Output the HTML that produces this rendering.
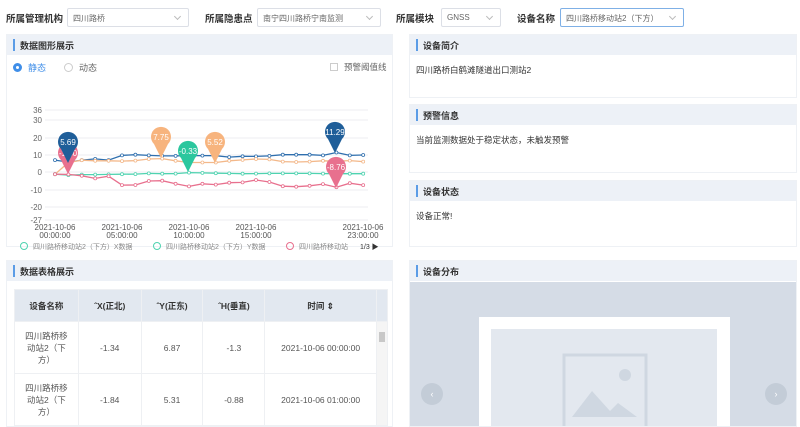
<!DOCTYPE html>
<html><head><meta charset="utf-8"><style>
*{box-sizing:border-box;margin:0;padding:0}
body{width:800px;height:427px;overflow:hidden;background:#fff;font-family:"Liberation Sans","Noto Sans CJK SC",sans-serif;font-size:9px;color:#333;position:relative}
.a{position:absolute}
.lbl{font-weight:bold;font-size:9.5px;color:#333}
.sel{border:1px solid #dcdfe6;border-radius:2px;height:19px;font-size:8px;color:#666;padding:4px 5px;background:#fff}
.sel:after{content:"";position:absolute;right:8px;top:5px;width:4px;height:4px;border-right:1px solid #bbb;border-bottom:1px solid #bbb;transform:rotate(45deg)}
.panel{background:#fff;border:1px solid #eef1f5}
.hd{height:20px;background:#edf1f7;font-weight:bold;font-size:9px;padding:4px 0 0 13px;position:relative}
.hd:before{content:"";position:absolute;left:6px;top:4px;width:2px;height:12px;background:#5b9ce6}
.body{font-size:8.5px;padding:9px 6px;color:#333}
table{border-collapse:collapse;font-size:8.5px}
td,th{text-align:center;border:1px solid #eef0f3}
th{background:#e2e8f0;font-weight:bold;height:32px}
td{height:52px;color:#555}
</style></head><body>
<div class="a lbl" style="left:6px;top:11px">所属管理机构</div>
<div class="a sel" style="left:67px;top:8px;width:122px">四川路桥</div>
<div class="a lbl" style="left:205px;top:11px">所属隐患点</div>
<div class="a sel" style="left:257px;top:8px;width:124px">南宁四川路桥宁南监测</div>
<div class="a lbl" style="left:396px;top:11px">所属模块</div>
<div class="a sel" style="left:441px;top:8px;width:60px">GNSS</div>
<div class="a lbl" style="left:517px;top:11px">设备名称</div>
<div class="a sel" style="left:560px;top:8px;width:124px;border-color:#7fb0e6">四川路桥移动站2（下方）</div>

<div class="a panel" style="left:6px;top:34px;width:387px;height:213px">
<div class="hd">数据图形展示</div>
<div class="a" style="left:6px;top:28px;width:9px;height:9px;border-radius:50%;border:3px solid #3f8ee8"></div>
<div class="a" style="left:21px;top:26px;color:#3f8ee8;font-size:9px">静态</div>
<div class="a" style="left:57px;top:28px;width:9px;height:9px;border-radius:50%;border:1px solid #ccc"></div>
<div class="a" style="left:72px;top:26px;color:#666;font-size:9px">动态</div>
<div class="a" style="left:323px;top:28px;width:8px;height:8px;border:1px solid #ccc"></div>
<div class="a" style="left:337px;top:26px;color:#666;font-size:8.5px">预警阈值线</div>
</div>
<svg class="a" style="left:0;top:0" width="400" height="250" id="ch"></svg>

<div class="a panel" style="left:409px;top:34px;width:388px;height:64px"><div class="hd">设备简介</div><div class="body">四川路桥白鹤滩隧道出口测站2</div></div>
<div class="a panel" style="left:409px;top:104px;width:388px;height:69px"><div class="hd">预警信息</div><div class="body">当前监测数据处于稳定状态，未触发预警</div></div>
<div class="a panel" style="left:409px;top:180px;width:388px;height:67px"><div class="hd">设备状态</div><div class="body">设备正常!</div></div>

<div class="a panel" style="left:6px;top:260px;width:387px;height:167px;overflow:hidden"><div class="hd">数据表格展示</div>
<table class="a" style="left:7px;top:28px;width:374px">
<tr><th style="width:64px">设备名称</th><th style="width:63px">ˆX(正北)</th><th style="width:62px">ˆY(正东)</th><th style="width:62px">ˆH(垂直)</th><th style="width:112px">时间 ⇕</th><th style="width:11px"></th></tr>
<tr><td>四川路桥移<br>动站2（下<br>方）</td><td>-1.34</td><td>6.87</td><td>-1.3</td><td>2021-10-06 00:00:00</td><td rowspan="2" style="background:#f5f5f5;vertical-align:top;padding-top:10px"><div style="width:6px;height:10px;background:#c8c8c8;margin:auto"></div></td></tr>
<tr><td>四川路桥移<br>动站2（下<br>方）</td><td>-1.84</td><td>5.31</td><td>-0.88</td><td>2021-10-06 01:00:00</td></tr>
</table></div>

<div class="a panel" style="left:409px;top:260px;width:388px;height:167px;overflow:hidden"><div class="hd">设备分布</div>
<div class="a" style="left:0;top:21px;width:388px;height:146px;background:#d5dce6"></div>
<div class="a" style="left:69px;top:56px;width:251px;height:120px;background:#fff"></div>
<div class="a" style="left:81px;top:68px;width:226px;height:110px;background:#e3e8ef"></div>
<svg class="a" style="left:152px;top:92px" width="86" height="80"><rect x="2" y="2" width="82" height="76" fill="none" stroke="#cfd7e1" stroke-width="3"/><circle cx="63" cy="22" r="6" fill="#cfd7e1"/><path d="M10 64 L30 38 L48 58 L56 50 L75 64Z" fill="#cfd7e1"/></svg>
<div class="a" style="left:11px;top:122px;width:22px;height:22px;border-radius:50%;background:#c3ccd7;color:#fff;text-align:center;line-height:22px">‹</div>
<div class="a" style="left:355px;top:122px;width:22px;height:22px;border-radius:50%;background:#c3ccd7;color:#fff;text-align:center;line-height:22px">›</div>
</div>
<script>
var s=document.getElementById('ch'),h='';
function Y(v){return 172-v*1.73}
[[36,110],[30,120],[20,138],[10,155],[0,172],[-10,190],[-20,207],[-27,220]].forEach(function(t){h+='<line x1="45" x2="368" y1="'+t[1]+'" y2="'+t[1]+'" stroke="#e6e9ee" stroke-width="0.8"/><text x="42" y="'+(t[1]+3)+'" font-size="8" fill="#666" text-anchor="end">'+t[0]+'</text>';});
var S=[["#2f6fae",[6.9,5.7,6.9,7.6,6.9,9.6,10,9.6,9.3,9.3,9.4,9.5,9.4,8.6,9.1,9,9.3,10,10,10,9.6,11.3,9.6,9.8]],
["#f3b88a",[-1.3,5.5,6.8,6.5,6.5,6.3,6.6,7.5,7.75,6.5,5.5,5.5,5.52,6.5,7,7.5,7.3,6,5.8,6,6.5,6.3,6.6,6]],
["#4fd3b0",[-1.3,-1.8,-1.5,-1.5,-1.4,-1.3,-1.2,-0.8,-1,-0.9,-0.33,-0.5,-0.7,-0.8,-1,-0.9,-0.8,-0.8,-0.8,-0.8,-0.9,-1,-1,-1]],
["#e8708e",[-1.3,-1.4,-2.2,-3.7,-2.4,-7.6,-7.5,-5.2,-5,-6.8,-8.3,-6.8,-7.3,-6.2,-6,-4.6,-5.8,-8.2,-8.5,-8,-7,-8.76,-6.5,-7.6]]];
S.forEach(function(r){var p=r[1].map(function(v,i){return (55+i*13.4).toFixed(1)+','+Y(v).toFixed(1)});h+='<polyline points="'+p.join(' ')+'" fill="none" stroke="'+r[0]+'" stroke-width="1.3"/>';p.forEach(function(q){var c=q.split(',');h+='<circle cx="'+c[0]+'" cy="'+c[1]+'" r="1.5" fill="#fff" stroke="'+r[0]+'" stroke-width="0.8"/>'})});
function pin(x,y,c,t){h+='<path d="M'+x+' '+y+' L'+(x-7)+' '+(y-14)+' A10 10 0 1 1 '+(x+7)+' '+(y-14)+'Z" fill="'+c+'"/><text x="'+x+'" y="'+(y-18)+'" font-size="8" fill="#fff" text-anchor="middle">'+t+'</text>'}
pin(68,174,"#e8708e","-1.30");pin(68,163,"#1f5e99","5.69");pin(161,158,"#f7b47e","7.75");pin(188,172,"#2bc79e","-0.33");pin(215,163,"#f7b47e","5.52");pin(335,153,"#1f5e99","11.29");pin(336,188,"#e8708e","-8.76");
[[55,"00:00:00"],[122,"05:00:00"],[189,"10:00:00"],[256,"15:00:00"],[363,"23:00:00"]].forEach(function(t){h+='<text x="'+t[0]+'" y="230" font-size="8" fill="#555" text-anchor="middle">2021-10-06</text><text x="'+t[0]+'" y="238" font-size="8" fill="#555" text-anchor="middle">'+t[1]+'</text>'});
[[24,"#4fd3b0","四川路桥移动站2（下方）X数据"],[157,"#4fd3b0","四川路桥移动站2（下方）Y数据"],[290,"#e8708e","四川路桥移动站"]].forEach(function(t){h+='<circle cx="'+t[0]+'" cy="246" r="3.5" fill="none" stroke="'+t[1]+'"/><text x="'+(t[0]+9)+'" y="249" font-size="7" fill="#888">'+t[2]+'</text>'});
h+='<text x="360" y="249" font-size="7" fill="#333">1/3 ▶</text>';
s.innerHTML=h;
</script>
</body></html>
